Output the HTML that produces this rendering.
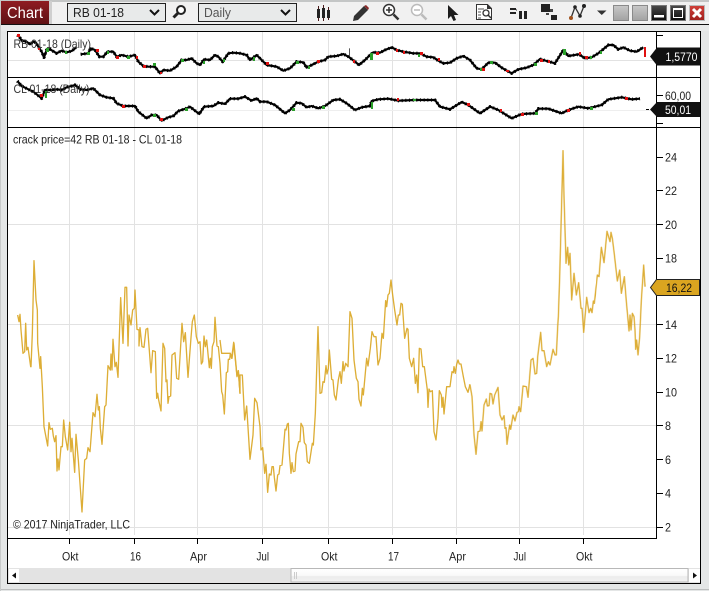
<!DOCTYPE html>
<html><head><meta charset="utf-8"><style>
html,body{margin:0;padding:0}
body{width:709px;height:591px;overflow:hidden;background:#e4e6e6;position:relative;font-family:"Liberation Sans",sans-serif}
svg{position:absolute;left:0;top:0}
text{font-family:"Liberation Sans",sans-serif}
</style></head><body>
<svg width="709" height="591" viewBox="0 0 709 591">
<defs>
<linearGradient id="r" x1="0" y1="0" x2="0" y2="1"><stop offset="0" stop-color="#8f1c22"/><stop offset="1" stop-color="#5e1014"/></linearGradient>
<linearGradient id="g" x1="0" y1="0" x2="0" y2="1"><stop offset="0" stop-color="#c8c8c8"/><stop offset="1" stop-color="#a2a2a2"/></linearGradient>
<linearGradient id="k" x1="0" y1="0" x2="0" y2="1"><stop offset="0" stop-color="#4a4a4a"/><stop offset="1" stop-color="#0a0a0a"/></linearGradient>
<linearGradient id="x" x1="0" y1="0" x2="0" y2="1"><stop offset="0" stop-color="#d0403a"/><stop offset="1" stop-color="#a01f1c"/></linearGradient>
<linearGradient id="s" x1="0" y1="0" x2="0" y2="1"><stop offset="0" stop-color="#ffffff"/><stop offset=".5" stop-color="#fafafa"/><stop offset=".6" stop-color="#ececec"/><stop offset="1" stop-color="#f2f2f2"/></linearGradient>
<polyline id="p1" points="52,105 58,110 65,122 80,125 90,133 100,125 108,128 115,140 125,155 132,172 140,150 150,148 170,160 185,152 200,157 215,153 228,143"/>
<polyline id="p2" points="242,163 265,160 272,145 285,150 298,170 310,170 322,155 340,155 350,170 365,165 385,170 405,165 415,185 430,198 445,200 465,200 480,220 490,210 510,212 530,200 545,180 560,180 575,175 590,190 600,195 612,178 630,180 645,165 655,170 668,185 685,160 700,158 720,160 740,165 750,180 770,165 785,180 800,195 830,200 850,212 870,205 890,185 910,187 920,203 935,195 955,185 975,180 985,170 1010,168 1030,162 1045,170 1065,185"/>
<polyline id="p3" points="52,243 65,258 85,268 100,275 125,295 135,270 155,270 170,268 185,270 200,262 225,255 240,268 262,270 280,265 300,285 320,292 340,295 350,310 370,318 405,318 415,335 440,355 455,345 470,345 485,362 505,352 520,348 535,333 560,325 570,320 585,332 598,342 612,320 640,318 655,308 675,312 690,296 715,296 735,290 755,302 770,295 780,305 800,305 825,315 855,340 870,330 890,308 905,310 920,322 935,318 955,325 975,318 1000,300 1020,298 1040,310 1065,330"/>
<polyline id="p4" points="0,185 12,195 30,180 45,165 55,157 75,158 90,150 110,142 125,150 145,155 175,160 195,160 215,170 235,172 250,182 265,190 285,188 305,175 325,168 345,180 365,205 380,208 400,188 420,188 440,203 470,220 490,208 515,203 535,195 555,177 575,183 600,190 625,150 640,168 672,163 690,175 710,172 730,160 760,135 775,135 790,148 805,142 825,152 845,155 865,142"/>
<polyline id="p5" points="0,330 20,322 45,318 50,303 70,298 100,296 130,302 180,300 240,300 255,320 285,328 320,306 340,315 375,340 405,320 430,330 470,355 500,342 540,340 550,326 580,326 620,340 640,330 670,320 700,325 740,315 760,298 800,292 830,298 855,296"/>
</defs>
<!-- toolbar -->
<rect x="0" y="0" width="709" height="2" fill="#c4c6c6"/>
<rect x="0" y="2" width="709" height="22" fill="#f1f1f1"/>
<rect x="0" y="24" width="709" height="1" fill="#111"/>
<rect x="0" y="25" width="709" height="6" fill="#e8eaea"/>
<rect x="47" y="1" width="5" height="23" fill="#cfcfcf"/>
<rect x="1" y="1" width="48" height="23" fill="url(#r)"/>
<text x="7" y="18" font-size="16" fill="#fff" textLength="36" lengthAdjust="spacingAndGlyphs">Chart</text>
<rect x="67.500" y="3.500" width="98" height="18" fill="#e8eaea" stroke="#222"/>
<text x="73" y="17" font-size="13" fill="#222" textLength="51" lengthAdjust="spacingAndGlyphs">RB 01-18</text>
<path d="M150 10l4.500 4.500 4.500-4.500" fill="none" stroke="#111" stroke-width="2"/>
<rect x="198.500" y="3.500" width="98" height="18" fill="#e8eaea" stroke="#222"/>
<text x="204" y="17" font-size="13" fill="#555" textLength="27" lengthAdjust="spacingAndGlyphs">Daily</text>
<path d="M281 10l4.500 4.500 4.500-4.500" fill="none" stroke="#111" stroke-width="2"/>
<!-- search -->
<circle cx="181" cy="10" r="4" fill="#fff" stroke="#222" stroke-width="2"/><path d="M178 13l-4.500 4.500" stroke="#222" stroke-width="3"/>
<!-- candles -->
<path d="M318.500 6v15M323.500 5v16M328.500 7v13" stroke="#4a1a1a" stroke-width="1"/>
<path d="M318.500 9v9M323.500 8v10M328.500 10v8" stroke="#222" stroke-width="3"/>
<!-- pencil -->
<path d="M353 21l1-5 10-10 4 4-10 10z" fill="#333"/><path d="M364 6l2-1 3 3-1 2z" fill="#8a2a2a"/>
<!-- zoom in -->
<circle cx="389" cy="10" r="5.500" fill="#fff" stroke="#333" stroke-width="1.500"/><path d="M386 10h6M389 7v6" stroke="#333" stroke-width="1.500"/><path d="M393.500 14.500l5 5" stroke="#333" stroke-width="2.500"/>
<!-- zoom out -->
<circle cx="417" cy="10" r="5.500" fill="#fff" stroke="#bbb" stroke-width="1.500"/><path d="M414 10h6" stroke="#bbb" stroke-width="1.500"/><path d="M421.500 14.500l5 5" stroke="#bbb" stroke-width="2.500"/>
<!-- arrow -->
<path d="M448 5v14l3-3 2.500 5 2.500-1-2-5h4.500z" fill="#1c1c1c"/>
<!-- doc -->
<path d="M476.500 4.500h11l4 4v11h-15z" fill="#fff" stroke="#333"/><path d="M487 4l5 5h-5z" fill="#333"/><path d="M478 9h6M478 12h3M478 15h3M478 18h3" stroke="#555"/><circle cx="486" cy="13" r="3" fill="#fff" stroke="#333" stroke-width="1.300"/><path d="M488 15l3 3" stroke="#333" stroke-width="1.500"/>
<!-- data box -->
<path d="M510 8h6v2h-6zM510 12h6v2h-6zM516 9.500h1v1h-1z" fill="#222"/><rect x="519" y="11" width="3" height="8" fill="#222"/><rect x="524" y="11" width="3" height="8" fill="#222"/>
<!-- blocks -->
<rect x="541" y="4" width="9" height="8" fill="#222"/><rect x="551" y="15" width="6" height="5" fill="#222"/><rect x="550" y="9" width="3" height="3" fill="#444"/><rect x="546" y="13" width="3" height="2" fill="#444"/>
<!-- lines -->
<path d="M571 18l4-11 5 9 4-10" fill="none" stroke="#333" stroke-width="1.300"/><circle cx="571" cy="18" r="2" fill="#a0521d"/><circle cx="575" cy="7" r="1.800" fill="#222"/><circle cx="580" cy="16" r="1.800" fill="#222"/><circle cx="584" cy="6" r="2" fill="#222"/>
<path d="M597 10.500h9.500l-4.750 4.500z" fill="#333"/>
<!-- window buttons -->
<rect x="613.500" y="5.500" width="15" height="15" fill="url(#g)" stroke="#8a8a8a"/>
<rect x="632.500" y="5.500" width="15" height="15" fill="url(#g)" stroke="#8a8a8a"/>
<rect x="651.500" y="5.500" width="15" height="15" fill="url(#k)" stroke="#777"/><rect x="654" y="15" width="10" height="2.500" fill="#fff"/>
<rect x="670.500" y="5.500" width="15" height="15" fill="url(#k)" stroke="#777"/><rect x="673.500" y="8.500" width="9" height="9" fill="none" stroke="#fff"/><rect x="673" y="8" width="10" height="2" fill="#fff"/>
<rect x="689.500" y="5.500" width="15" height="15" fill="url(#x)" stroke="#bbb"/><path d="M693 9l8 8M701 9l-8 8" stroke="#fff" stroke-width="3"/>
<!-- frame -->
<rect x="7" y="31" width="694" height="553" fill="#fff"/>
<!-- grid -->
<g stroke="#e2e2e2" stroke-width="1">
<path d="M8 224.500H656M8 324.500H656M8 425.500H656M8 527.500H656"/>
<path d="M69.500 32V535M134.500 32V535M197.500 32V535M262.500 32V535M328.500 32V535M392.500 32V535M456.500 32V535M519.500 32V535M583.500 32V535"/>
<path d="M8 60.500H656"/><path d="M8 110.500H656" stroke="#eee"/>
</g>
<!-- price panels -->
<g transform="scale(.33333)" fill="none" stroke="#000" stroke-linejoin="round">
<g stroke-width="6.500"><use href="#p1"/><use href="#p2"/><use href="#p3"/></g>
<g stroke-width="10" stroke-dasharray="3 8"><use href="#p1"/><use href="#p2"/><use href="#p3"/></g>
<path d="M1048 145V175" stroke-width="2"/>
</g>
<g transform="translate(355,0) scale(.33333)" fill="none" stroke="#000" stroke-linejoin="round">
<g stroke-width="6.500"><use href="#p4"/><use href="#p5"/></g>
<g stroke-width="10" stroke-dasharray="3 8"><use href="#p4"/><use href="#p5"/></g>
</g>
<!-- markers -->
<g fill="#e01010" shape-rendering="crispEdges">
<rect x="17" y="34" width="3" height="3"/><rect x="38" y="47" width="2" height="3"/><rect x="96" y="49" width="3" height="3"/><rect x="116" y="56" width="3" height="3"/><rect x="136" y="56" width="2" height="3"/><rect x="143" y="65" width="3" height="3"/><rect x="160" y="72" width="2" height="2"/><rect x="266" y="62" width="3" height="3"/><rect x="317" y="60" width="3" height="3"/><rect x="353" y="60" width="2" height="3"/>
<rect x="376" y="52" width="3" height="3"/><rect x="396" y="49" width="2" height="3"/><rect x="403" y="51" width="2" height="3"/><rect x="420" y="52" width="3" height="3"/><rect x="438" y="58" width="2" height="3"/><rect x="482" y="68" width="3" height="3"/><rect x="506" y="70" width="3" height="2"/><rect x="540" y="59" width="3" height="3"/><rect x="548" y="60" width="2" height="3"/><rect x="579" y="52" width="2" height="3"/><rect x="585" y="56" width="3" height="3"/>
<rect x="644" y="47" width="2" height="10"/>
<rect x="40" y="94" width="3" height="3"/><rect x="122" y="105" width="3" height="3"/><rect x="160" y="118" width="3" height="3"/><rect x="397" y="98" width="2" height="3"/><rect x="467" y="103" width="3" height="3"/><rect x="500" y="109" width="2" height="3"/><rect x="521" y="113" width="3" height="3"/><rect x="567" y="109" width="3" height="3"/><rect x="625" y="97" width="3" height="3"/>
</g>
<g fill="#2aa02a" shape-rendering="crispEdges">
<rect x="46" y="48" width="3" height="4"/><rect x="65" y="51" width="2" height="3"/><rect x="87" y="52" width="3" height="3"/><rect x="107" y="51" width="2" height="3"/><rect x="127" y="56" width="3" height="3"/><rect x="153" y="63" width="3" height="3"/><rect x="181" y="59" width="3" height="3"/><rect x="203" y="61" width="2" height="3"/><rect x="223" y="59" width="2" height="3"/><rect x="253" y="57" width="2" height="4"/><rect x="296" y="61" width="3" height="3"/><rect x="308" y="66" width="2" height="3"/>
<rect x="370" y="53" width="3" height="7"/><rect x="418" y="54" width="2" height="3"/><rect x="480" y="68" width="2" height="3"/><rect x="490" y="61" width="3" height="3"/><rect x="534" y="63" width="3" height="3"/><rect x="563" y="49" width="3" height="6"/><rect x="590" y="56" width="2" height="3"/><rect x="600" y="51" width="2" height="3"/>
<rect x="45" y="91" width="2" height="7"/><rect x="153" y="114" width="3" height="3"/><rect x="185" y="108" width="3" height="3"/><rect x="292" y="108" width="3" height="3"/><rect x="322" y="106" width="3" height="3"/><rect x="371" y="102" width="2" height="7"/><rect x="413" y="99" width="3" height="2"/><rect x="535" y="112" width="3" height="3"/><rect x="590" y="107" width="3" height="3"/>
</g>
<!-- crack line -->
<g fill="none" stroke="#DAA520" stroke-width="4" stroke-linejoin="round" opacity=".9">
<polyline transform="translate(0,300) scale(.33333)" points="53,45 57,65 60,43 63,90 69,160 74,155 77,70 80,150 84,142 92,200 93,200 97,100 102,-118 108,0 112,30 113,130 120,205 122,170 127,260 132,380 143,438 147,368 151,388 157,385 160,408 164,425 168,407 171,513 174,477 177,510 183,440 187,440 191,360 196,410 203,450 209,367 213,455 216,415 224,517 228,403 235,480 246,636 254,480 260,475 264,443 270,455 279,338 285,350 291,283 295,330 298,320 301,385 306,433 314,320 318,315 324,197 331,210 333,162 336,210 339,118 345,200 349,187 354,232 362,-7 369,130 375,-38 380,-38 384,138 387,45 393,75 398,30 403,25 405,-30 411,88 417,90 417,138 420,83 426,140 432,142 438,88 443,85 453,218 458,152 466,155 470,295 473,280 476,300 483,333 489,130 494,145 498,245 501,240 504,310 507,290 512,288 516,165 525,158 530,235 536,238 546,70 551,125 556,98 564,232 573,113 577,65 583,45 589,110 595,130 600,125 604,192 608,185 612,108 616,140 620,120 628,203 631,175 634,205 637,140 642,125 645,52 651,138 655,140 660,190 665,275 668,285 673,342 679,218 683,215 685,178 689,178 691,160 696,175 702,130 711,228 715,212 720,280"/>
<polyline transform="translate(230,270) scale(.33333)" points="-30,210 -25,250 0,250 5,265 11,217 21,320 25,302 30,370 30,315 37,315 44,450 50,408 60,568 69,495 74,385 81,398 90,470 93,540 98,533 104,610 108,583 113,667 118,612 123,615 126,590 130,590 133,622 138,663 143,615 147,612 150,587 156,585 165,478 168,480 172,462 175,460 178,550 183,610 186,578 190,605 195,603 198,552 206,515 210,515 213,460 219,472 223,518 228,525 232,575 238,580 247,520 250,525 256,430 264,170 270,370 275,368 279,335 283,337 288,287 291,312 295,295 298,240 305,328 309,330 313,375 318,390 325,330 330,305 334,340 339,275 342,303 347,280 354,290 360,125 366,145 372,270 379,325 384,335 387,388 393,408 397,355 400,375 410,265 414,288 421,235 426,185 432,200 438,200 444,285 450,265 456,190 460,205 467,92 470,110 474,75 478,70 483,30 488,75 494,120 501,165 505,135 509,135 513,100 517,103 524,205 531,175 534,178 538,265 545,290 551,265 556,340 560,315 564,368 568,235 573,237 578,290 583,290 592,360 594,412 597,357 601,365 607,362 612,485 618,510 624,445 628,362 634,375 636,412 639,382 642,432 650,350 660,350 666,305 670,308 672,290 676,310 680,283 684,270 688,282 693,282 700,320 706,350 714,367 720,343"/>
<polyline transform="translate(469,130) scale(.33333)" points="0,765 3,765 9,800 15,915 21,973 27,905 33,903 36,875 39,903 45,825 52,807 55,828 60,827 63,790 68,792 72,822 77,795 87,772 93,855 99,870 105,857 108,895 111,893 114,943 119,905 122,885 125,898 132,855 138,873 144,847 148,845 150,830 155,845 162,768 172,770 177,802 186,690 192,685 198,732 203,730 206,680 215,607 219,662 225,662 233,710 238,695 243,705 252,658 258,675 262,675 266,590 268,560 272,440 282,62 285,200 291,400 296,352 299,405 303,370 308,510 315,430 322,495 329,458 336,535 339,535 344,607 353,502 360,548 365,535 369,548 373,513 376,520 385,435 390,440 397,352 405,398 414,304 423,335 426,307 430,325 435,365 445,453 452,420 457,490 466,440 472,515 480,603 483,555 486,600 490,550 495,560 498,600 500,658 503,630 507,675 512,620 517,510 524,405 528,470"/>
</g>
<!-- panel frames -->
<g fill="#000" shape-rendering="crispEdges">
<rect x="7" y="31" width="694" height="1"/>
<rect x="7" y="77" width="694" height="1"/>
<rect x="7" y="127" width="694" height="1"/>
<rect x="7" y="31" width="1" height="553"/>
<rect x="700" y="31" width="1" height="553"/>
<rect x="7" y="583" width="694" height="1"/>
<rect x="8" y="538" width="649" height="1"/>
<rect x="656" y="32" width="1" height="507"/>
</g>
<rect x="0" y="589" width="709" height="1" fill="#bcbebe"/>
<rect x="0" y="0" width="1" height="591" fill="#c8caca"/>
<!-- ticks -->
<path d="M657 35.500h6M657 95.500h6M657 123.500h6M657 157.500h6M657 190.500h6M657 224.500h6M657 258.500h6M657 291.500h6M657 324.500h6M657 358.500h6M657 392.500h6M657 425.500h6M657 459.500h6M657 493.500h6M657 527.500h6M646 109.500h3" stroke="#000"/>
<path d="M69.500 539v5M134.500 539v5M197.500 539v5M262.500 539v5M328.500 539v5M392.500 539v5M456.500 539v5M519.500 539v5M583.500 539v5" stroke="#000"/>
<!-- labels -->
<g font-size="12" fill="#222" lengthAdjust="spacingAndGlyphs">
<text x="13.500" y="48" fill="#333" textLength="77.500" lengthAdjust="spacingAndGlyphs">RB 01-18 (Daily)</text>
<text x="13.500" y="93" fill="#333" textLength="76" lengthAdjust="spacingAndGlyphs">CL 01-18 (Daily)</text>
<text x="13" y="143.500" textLength="169" lengthAdjust="spacingAndGlyphs">crack price=42 RB 01-18 - CL 01-18</text>
<text x="13" y="528.500" textLength="117" lengthAdjust="spacingAndGlyphs">© 2017 NinjaTrader, LLC</text>
<text x="665" y="100" textLength="26" lengthAdjust="spacingAndGlyphs">60,00</text>
<text x="665" y="161.500" textLength="12" lengthAdjust="spacingAndGlyphs">24</text><text x="665" y="195" textLength="12" lengthAdjust="spacingAndGlyphs">22</text><text x="665" y="229" textLength="12" lengthAdjust="spacingAndGlyphs">20</text><text x="665" y="262.500" textLength="12" lengthAdjust="spacingAndGlyphs">18</text><text x="665" y="329" textLength="12" lengthAdjust="spacingAndGlyphs">14</text><text x="665" y="362.500" textLength="12" lengthAdjust="spacingAndGlyphs">12</text><text x="665" y="396.500" textLength="12" lengthAdjust="spacingAndGlyphs">10</text>
<text x="665" y="430" textLength="6" lengthAdjust="spacingAndGlyphs">8</text><text x="665" y="464" textLength="6" lengthAdjust="spacingAndGlyphs">6</text><text x="665" y="497.500" textLength="6" lengthAdjust="spacingAndGlyphs">4</text><text x="665" y="531.500" textLength="6" lengthAdjust="spacingAndGlyphs">2</text>
<text x="62" y="560.500" textLength="16.500" lengthAdjust="spacingAndGlyphs">Okt</text><text x="130" y="560.500" textLength="11" lengthAdjust="spacingAndGlyphs">16</text><text x="190" y="560.500" textLength="17" lengthAdjust="spacingAndGlyphs">Apr</text><text x="256.500" y="560.500" textLength="12.500" lengthAdjust="spacingAndGlyphs">Jul</text><text x="321" y="560.500" textLength="16.500" lengthAdjust="spacingAndGlyphs">Okt</text><text x="388" y="560.500" textLength="11" lengthAdjust="spacingAndGlyphs">17</text><text x="449" y="560.500" textLength="17" lengthAdjust="spacingAndGlyphs">Apr</text><text x="513.500" y="560.500" textLength="12.500" lengthAdjust="spacingAndGlyphs">Jul</text><text x="576" y="560.500" textLength="16.500" lengthAdjust="spacingAndGlyphs">Okt</text>
</g>
<!-- tags -->
<path d="M650 56.500l7-9h43v18h-43z" fill="#111"/>
<text x="665.500" y="61" font-size="12" fill="#fff" textLength="32" lengthAdjust="spacingAndGlyphs">1,5770</text>
<path d="M650 109.500l7-7.500h43v15h-43z" fill="#111"/>
<text x="665" y="114" font-size="12" fill="#fff" textLength="26" lengthAdjust="spacingAndGlyphs">50,01</text>
<path d="M650.500 287.500l6-8h43v16h-43z" fill="#DAA520" stroke="#222"/>
<text x="666" y="292" font-size="12" fill="#111" textLength="26" lengthAdjust="spacingAndGlyphs">16,22</text>
<!-- scrollbar -->
<rect x="8" y="568" width="692" height="15" fill="#e3e3e3"/>
<rect x="9" y="569" width="10" height="13" fill="#fff"/>
<path d="M16 572.500v6l-4-3z" fill="#111"/>
<rect x="291" y="568.500" width="397" height="13.500" fill="url(#s)" stroke="#b8b8b8"/>
<path d="M294.500 572v7M296.500 572v7" stroke="#ccc"/>
<rect x="689" y="569" width="11" height="13" fill="#fff"/>
<path d="M693 572.500v6l4-3z" fill="#111"/>
</svg>
</body></html>
